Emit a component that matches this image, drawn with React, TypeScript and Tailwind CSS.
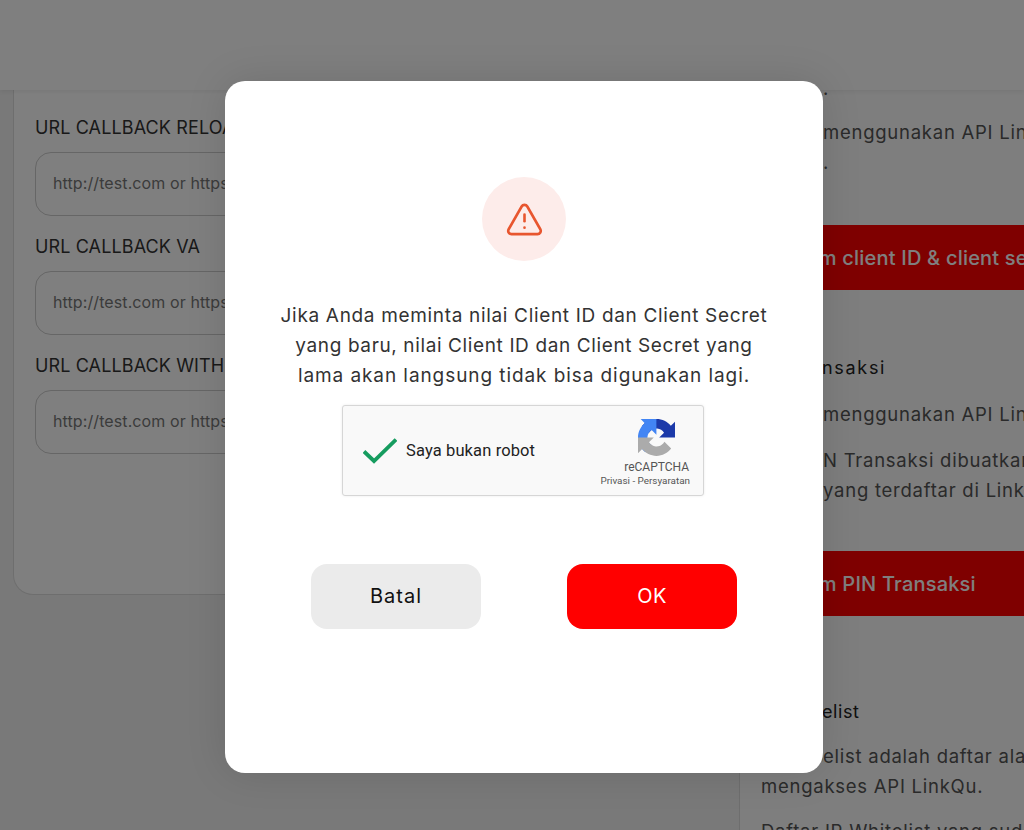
import { TriangleAlert } from "lucide-react";

const poppins = "font-['Inter','Noto_Sans',sans-serif]";

function UrlField({ label }: { label: string }) {
  return (
    <div className="mb-[17px]">
      <div className="mb-[11px] h-[27px] text-[18px] leading-[27px] tracking-[0.12px] text-[#333] whitespace-nowrap">{label}</div>
      <div className="flex h-[64px] w-[640px] items-center rounded-2xl border border-[#ccc] pb-[2px] pl-[17px] text-[16px] tracking-[0.1px] text-[#777]">
        http://test.com or https://test.com
      </div>
    </div>
  );
}

function RedAction({ label }: { label: string }) {
  return (
    <div className="flex h-[65px] w-[400px] items-center bg-[#ff0000] pl-[25px] text-[20px] font-medium tracking-[0.2px] text-white whitespace-nowrap">
      {label}
    </div>
  );
}

// lead is the part of the line that sits behind the modal, its box fixes where the visible words start
function Body({ lead, children, className = "" }: { lead: string; children: string; className?: string }) {
  return (
    <div className={`h-[30px] text-[18.5px] leading-[30px] tracking-[0.75px] text-[#555] whitespace-nowrap ${className}`}>
      <span className="inline-block w-[62px] overflow-hidden align-top">{lead}</span>
      {children}
    </div>
  );
}

function Heading({ lead, children, className = "", tail = "" }: { lead: string; children: string; className?: string; tail?: string }) {
  return (
    <div className={`h-[30px] text-[18px] leading-[30px] tracking-[0.6px] text-[#222] whitespace-nowrap ${className}`}>
      <span className="inline-block w-[61px] overflow-hidden align-top">{lead}</span>
      <span className={tail}>{children}</span>
    </div>
  );
}

function RecaptchaLogo() {
  return (
    <svg viewBox="0 0 64 64" className="mr-[15px] h-[37px] w-[37px]">
      <path fill="#1c3aa9" d="M64 31.955l-.033-1.37V4.687l-7.16 7.16C50.948 4.674 42.033.093 32.05.093c-10.4 0-19.622 4.96-25.458 12.64l11.736 11.86a15.55 15.55 0 0 1 4.754-5.334c2.05-1.6 4.952-2.906 8.968-2.906.485 0 .86.057 1.135.163 4.976.393 9.288 3.14 11.828 7.124l-8.307 8.307c10.522-.04 22.4-.066 27.295.006" />
      <path fill="#4285f4" d="M31.862.001l-1.37.033H4.594l7.16 7.16C4.58 13.054-.001 21.97-.001 31.953c0 10.4 4.96 19.622 12.64 25.458l11.86-11.736a15.55 15.55 0 0 1-5.334-4.754c-1.6-2.05-2.906-4.952-2.906-8.968 0-.485.057-.86.163-1.135.393-4.976 3.14-9.288 7.124-11.828l8.307 8.307c-.04-10.522-.066-22.4.006-27.295" />
      <path fill="#ababab" d="M.001 32l.033 1.37v25.898l7.16-7.16c5.86 7.173 14.774 11.754 24.76 11.754 10.4 0 19.622-4.96 25.458-12.64l-11.736-11.86a15.55 15.55 0 0 1-4.754 5.334c-2.05 1.6-4.952 2.906-8.968 2.906-.485 0-.86-.057-1.135-.163-4.976-.393-9.288-3.14-11.828-7.124l8.307-8.307c-10.522.04-22.4.066-27.295-.006" />
    </svg>
  );
}

function Recaptcha() {
  return (
    <div className="mr-[2px] flex h-[91px] w-[362px] items-center justify-between rounded-[3px] border border-[#d6d6d6] bg-[#f9f9f9] pl-[20px] pr-[13px] shadow-[0_0_3px_rgba(0,0,0,0.08)] font-['Roboto',sans-serif]">
      <div className="flex items-center gap-[9px]">
        <svg viewBox="0 0 34 26" className="h-[26px] w-[34px]">
          <path d="M1 13.5l10 9.5L33 1.5" fill="none" stroke="#169c5f" strokeWidth="3.8" />
        </svg>
        <span className="pt-[1px] text-[16.5px] tracking-[0.12px] text-[#222]">Saya bukan robot</span>
      </div>
      <div className="flex flex-col items-end pt-[5px]">
        <RecaptchaLogo />
        <div className="mr-[1px] mt-[4px] text-[12px] leading-[14px] text-[#555]">reCAPTCHA</div>
        <div className="text-[9.9px] leading-[14px] text-[#555]">Privasi - Persyaratan</div>
      </div>
    </div>
  );
}

export default function App() {
  return (
    <div className={`relative h-[830px] w-[1024px] overflow-hidden bg-[#f2f2f2] ${poppins}`}>
      <div className="relative z-10 h-[90px] bg-white shadow-[0_2px_4px_rgba(0,0,0,0.06)]" />
      <div className="flex">
        <div className="w-[739px] shrink-0 pl-[13px]">
          <div className="h-[505px] w-[713px] rounded-b-[20px] border border-t-0 border-[#ddd] bg-white pl-[21px] pt-[24px]">
            <UrlField label="URL CALLBACK RELOAD" />
            <UrlField label="URL CALLBACK VA" />
            <UrlField label="URL CALLBACK WITHDRAW" />
          </div>
        </div>
        <div className="h-[740px] flex-1 border-l border-[#ddd] bg-[#fcfcfc] pl-[21px]">
          <Body lead="Secret" className="-mt-[17px]">.</Body>
          <Body lead="Untuk" className="mt-[14px]">menggunakan API LinkQu</Body>
          <Body lead="Secret">.</Body>
          <div className="mt-[48px]"><RedAction label="Kirim client ID & client secret" /></div>
          <Heading lead="PIN Tra" className="mt-[63px]" tail="tracking-[1.7px]">nsaksi</Heading>
          <Body lead="Untuk" className="mt-[16px]">menggunakan API LinkQu</Body>
          <Body lead="Nilai PI" className="mt-[16px]">N Transaksi dibuatkan</Body>
          <Body lead="Nomor">yang terdaftar di LinkQu</Body>
          <div className="mt-[46px]"><RedAction label="Kirim PIN Transaksi" /></div>
          <Heading lead="IP Whit" className="mt-[81px]">elist</Heading>
          <Body lead="IP Whit" className="mt-[14px]">elist adalah daftar alamat</Body>
          <div className="h-[30px] text-[18.5px] leading-[30px] tracking-[0.75px] text-[#555] whitespace-nowrap">mengakses API LinkQu.</div>
          <div className="mt-[15px] h-[30px] text-[18.5px] leading-[30px] tracking-[0.75px] text-[#555] whitespace-nowrap">Daftar IP Whitelist yang sudah</div>
        </div>
      </div>

      {/* modal layer */}
      <div className="absolute inset-0 z-20 bg-black/50 pl-[225px] pt-[81px]">
        <div className="flex h-[692px] w-[598px] flex-col items-center rounded-[20px] bg-white pt-[96px] shadow-[0_0_40px_rgba(0,0,0,0.12)]">
          <div className="flex h-[84px] w-[84px] items-center justify-center rounded-full bg-[#fdecea]">
            <TriangleAlert size={39} strokeWidth={1.6} color="#e8562f" />
          </div>
          <div className="mt-[40px] text-center text-[19px] leading-[30px] text-[#333]">
            <div className="tracking-[0.67px]">Jika Anda meminta nilai Client ID dan Client Secret</div>
            <div className="tracking-[0.62px]">yang baru, nilai Client ID dan Client Secret yang</div>
            <div className="tracking-[0.92px]">lama akan langsung tidak bisa digunakan lagi.</div>
          </div>
          <div className="mt-[14px]"><Recaptcha /></div>
          <div className="mt-[68px] flex gap-[86px]">
            <button className="h-[65px] w-[170px] rounded-2xl bg-[#ebebeb] pb-[2px] text-[20px] tracking-[1px] text-[#111]">Batal</button>
            <button className="h-[65px] w-[170px] rounded-2xl bg-[#ff0000] pb-[2px] text-[20px] tracking-[0.5px] text-white">OK</button>
          </div>
        </div>
      </div>
    </div>
  );
}
